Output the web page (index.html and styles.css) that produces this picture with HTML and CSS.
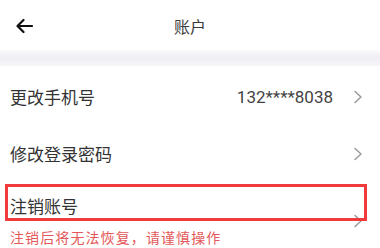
FILE: index.html
```html
<!DOCTYPE html>
<html lang="zh">
<head>
<meta charset="utf-8">
<link rel="stylesheet" href="styles.css">
</head>
<body>
<div class="page">
  <header class="topbar">
    <div class="back">
      <svg width="18" height="16" viewBox="0 0 18 16"><path d="M17 8H2.5M8.5 2L2.5 8l6 6" fill="none" stroke="#111" stroke-width="2.2" stroke-linecap="round" stroke-linejoin="round"/></svg>
    </div>
    <div class="title">账户</div>
    <div></div>
  </header>
  <div class="band"></div>
  <div class="row row-phone">
    <span class="label">更改手机号</span>
    <span class="value">132****8038</span>
    <svg class="chev" width="10" height="14" viewBox="0 0 10 14"><path d="M2 1.5l6 5.5-6 5.5" fill="none" stroke="#9a9a9a" stroke-width="1.5" stroke-linecap="round" stroke-linejoin="round"/></svg>
  </div>
  <div class="row row-pwd">
    <span class="label">修改登录密码</span>
    <svg class="chev" width="10" height="14" viewBox="0 0 10 14"><path d="M2 1.5l6 5.5-6 5.5" fill="none" stroke="#9a9a9a" stroke-width="1.5" stroke-linecap="round" stroke-linejoin="round"/></svg>
  </div>
  <div class="row row-cancel">
    <div class="stack">
      <span class="label">注销账号</span>
      <span class="warn">注销后将无法恢复，请谨慎操作</span>
    </div>
    <svg class="chev" width="10" height="14" viewBox="0 0 10 14"><path d="M2 1.5l6 5.5-6 5.5" fill="none" stroke="#9a9a9a" stroke-width="1.5" stroke-linecap="round" stroke-linejoin="round"/></svg>
    <div class="highlight"></div>
  </div>
</div>
</body>
</html>
```

FILE: styles.css
```css
html, body {
  margin: 0;
  padding: 0;
  background: #fff;
}
.page {
  width: 380px;
  height: 248px;
  overflow: hidden;
  font-family: "Noto Sans CJK SC", "Noto Sans", sans-serif;
  color: #333;
}
.topbar {
  height: 50px;
  display: grid;
  grid-template-columns: 1fr auto 1fr;
  align-items: center;
}
.back {
  padding-left: 15px;
  display: flex;
  align-items: center;
  padding-top: 1px;
}
.title {
  font-size: 16px;
  color: #3a3a3a;
  line-height: 20px;
  padding-top: 1px;
}
.band {
  height: 16px;
  background: linear-gradient(#fafafc, #efeef4 50%, #f6f6f9);
}
.row {
  display: flex;
  align-items: center;
  padding: 0 17px 0 10px;
  position: relative;
}
.row-phone { height: 61px; }
.row-pwd { height: 54px; }
.row-cancel { padding-top: 13px; }
.label {
  font-size: 17px;
  line-height: 24px;
  color: #333;
  flex: 1;
}
.value {
  font-family: Roboto, "Liberation Sans", sans-serif;
  font-size: 17px;
  color: #444;
  margin-right: 20px;
}
.chev {
  flex: none;
}
.stack {
  flex: 1;
  display: flex;
  flex-direction: column;
  gap: 9px;
}
.warn {
  font-size: 14px;
  line-height: 20px;
  letter-spacing: 1.1px;
  color: #e4585a;
}
.highlight {
  position: absolute;
  left: 5px;
  top: 3px;
  width: 356px;
  height: 31px;
  border: 3px solid #f03a3c;
}
```
